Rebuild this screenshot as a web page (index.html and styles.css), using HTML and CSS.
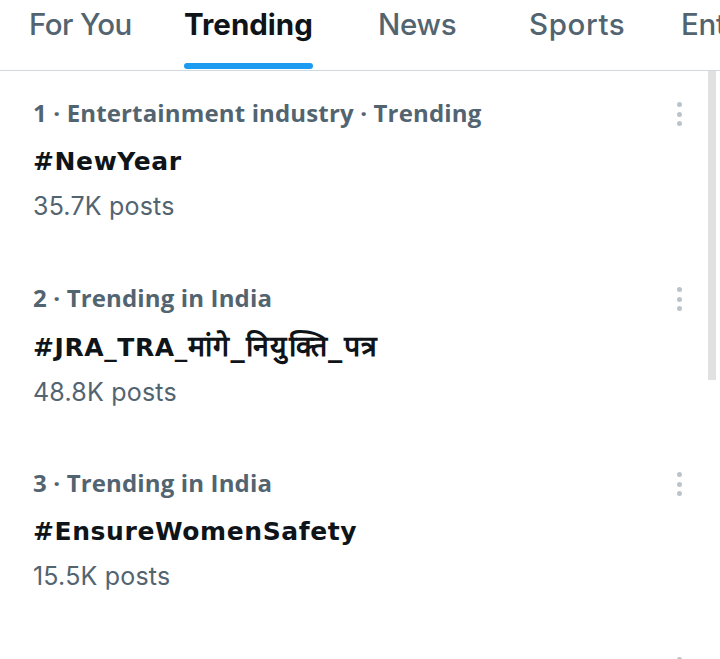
FILE: index.html
```html
<!DOCTYPE html>
<html lang="en">
<head>
<meta charset="utf-8">
<link rel="stylesheet" href="styles.css">
</head>
<body>
<div class="screen">
  <nav class="tabs">
    <div class="tab t1"><span class="label">For You</span></div>
    <div class="tab t2 active"><span class="label">Trending<span class="bar"></span></span></div>
    <div class="tab t3"><span class="label">News</span></div>
    <div class="tab t4"><span class="label">Sports</span></div>
    <div class="tab t5"><span class="label">Entertainment</span></div>
  </nav>
  <div class="list">
    <div class="trend">
      <div class="text">
        <div class="meta">1 · Entertainment industry · Trending</div>
        <div class="title">#NewYear</div>
        <div class="count">35.7K posts</div>
      </div>
      <div class="more"><span></span><span></span><span></span></div>
    </div>
    <div class="trend">
      <div class="text">
        <div class="meta">2 · Trending in India</div>
        <div class="title">#JRA_TRA_<span class="deva">मांगे_नियुक्ति_पत्र</span></div>
        <div class="count">48.8K posts</div>
      </div>
      <div class="more"><span></span><span></span><span></span></div>
    </div>
    <div class="trend">
      <div class="text">
        <div class="meta">3 · Trending in India</div>
        <div class="title">#EnsureWomenSafety</div>
        <div class="count">15.5K posts</div>
      </div>
      <div class="more"><span></span><span></span><span></span></div>
    </div>
    <div class="trend">
      <div class="text"></div>
      <div class="more"><span></span><span></span><span></span></div>
    </div>
  </div>
  <div class="scrollbar"></div>
</div>
</body>
</html>
```
FILE: styles.css
```css
html, body {
  margin: 0;
  padding: 0;
  background: #ffffff;
}
body {
  font-family: Inter, Roboto, "Noto Sans", sans-serif;
  color: #0f1419;
  overflow: hidden;
}
.screen {
  position: relative;
  width: 720px;
  height: 659px;
  overflow: hidden;
}
.tabs {
  display: flex;
  height: 70px;
  padding-left: 29px;
  border-bottom: 1px solid #cfd9de;
  white-space: nowrap;
}
.tab {
  flex: none;
  font-family: Inter, sans-serif;
  font-size: 29.5px;
  font-weight: 500;
  color: #536471;
  line-height: 48px;
  letter-spacing: -0.3px;
}
.t1 { width: 155px; letter-spacing: -0.6px; }
.t2 { width: 194px; }
.t3 { width: 151px; }
.t4 { width: 152px; letter-spacing: 0.6px; }
.label {
  position: relative;
  display: inline-block;
}
.tab.active {
  color: #0f1419;
  font-weight: 700;
  letter-spacing: 0;
}
.bar {
  position: absolute;
  left: 0;
  right: 0;
  top: 63px;
  height: 6px;
  border-radius: 3px;
  background: #1d9bf0;
}
.trend {
  display: flex;
  height: 185px;
  padding-left: 33px;
}
.text {
  flex: 1;
  padding-top: 26px;
}
.meta {
  font-family: "Open Sans", sans-serif;
  font-size: 24px;
  font-weight: 700;
  color: #536471;
  line-height: 32px;
  letter-spacing: 0.15px;
  white-space: nowrap;
}
.title {
  font-family: "DejaVu Sans", sans-serif;
  font-size: 25px;
  font-weight: 700;
  color: #0f1419;
  line-height: 44px;
  margin-top: 11px;
  letter-spacing: 0.6px;
  white-space: nowrap;
}
.deva {
  font-size: 28.5px;
  letter-spacing: 1.3px;
}
.count {
  font-family: Inter, sans-serif;
  font-size: 25px;
  font-weight: 400;
  color: #536471;
  line-height: 40px;
  margin-top: 2px;
  letter-spacing: 0.2px;
}
.more {
  width: 6px;
  margin-right: 37px;
  padding-top: 31px;
  display: flex;
  flex-direction: column;
  gap: 4.5px;
}
.more span {
  width: 5px;
  height: 5px;
  border-radius: 50%;
  background: #b9c4cc;
}
.scrollbar {
  position: absolute;
  right: 4px;
  top: 71px;
  width: 8px;
  height: 309px;
  background: #e1e1e1;
}
```
